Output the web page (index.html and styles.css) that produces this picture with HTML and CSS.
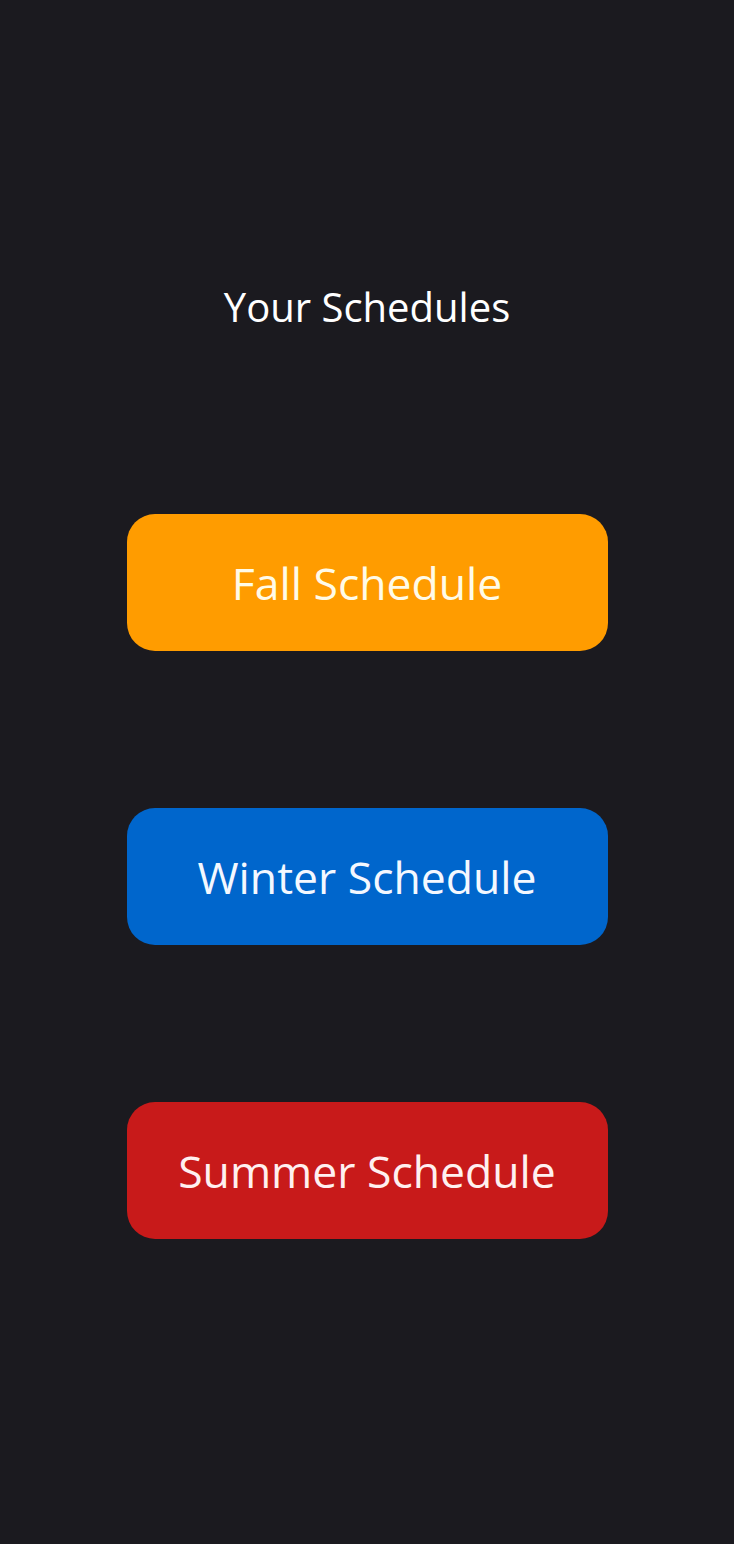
FILE: index.html
```html
<!DOCTYPE html>
<html>
<head>
<meta charset="utf-8">
<link rel="stylesheet" href="styles.css">
</head>
<body>
<main class="page">
  <h1 class="title">Your Schedules</h1>
  <nav class="buttons">
    <button class="btn btn-fall">Fall Schedule</button>
    <button class="btn btn-winter">Winter Schedule</button>
    <button class="btn btn-summer">Summer Schedule</button>
  </nav>
</main>
</body>
</html>
```
FILE: styles.css
```css
html, body {
  margin: 0;
  padding: 0;
  background: #1b1a1f;
  height: 100%;
}
.page {
  display: flex;
  flex-direction: column;
  align-items: center;
  padding-top: 283px;
  font-family: "Open Sans", "Noto Sans", sans-serif;
}
.title {
  margin: 0;
  font-size: 40px;
  line-height: 48px;
  font-weight: 400;
  color: #ffffff;
}
.buttons {
  margin-top: 183px;
  display: flex;
  flex-direction: column;
  gap: 157px;
}
.btn {
  width: 481px;
  height: 137px;
  border: none;
  border-radius: 28px;
  font-family: inherit;
  font-size: 44.5px;
  color: #fffbe8;
  padding: 0;
}
.btn-fall { background: #ff9c00; }
.btn-winter { background: #0066cc; color: #f4f8ff; }
.btn-summer { background: #c81a1a; color: #fff0f0; }
```
